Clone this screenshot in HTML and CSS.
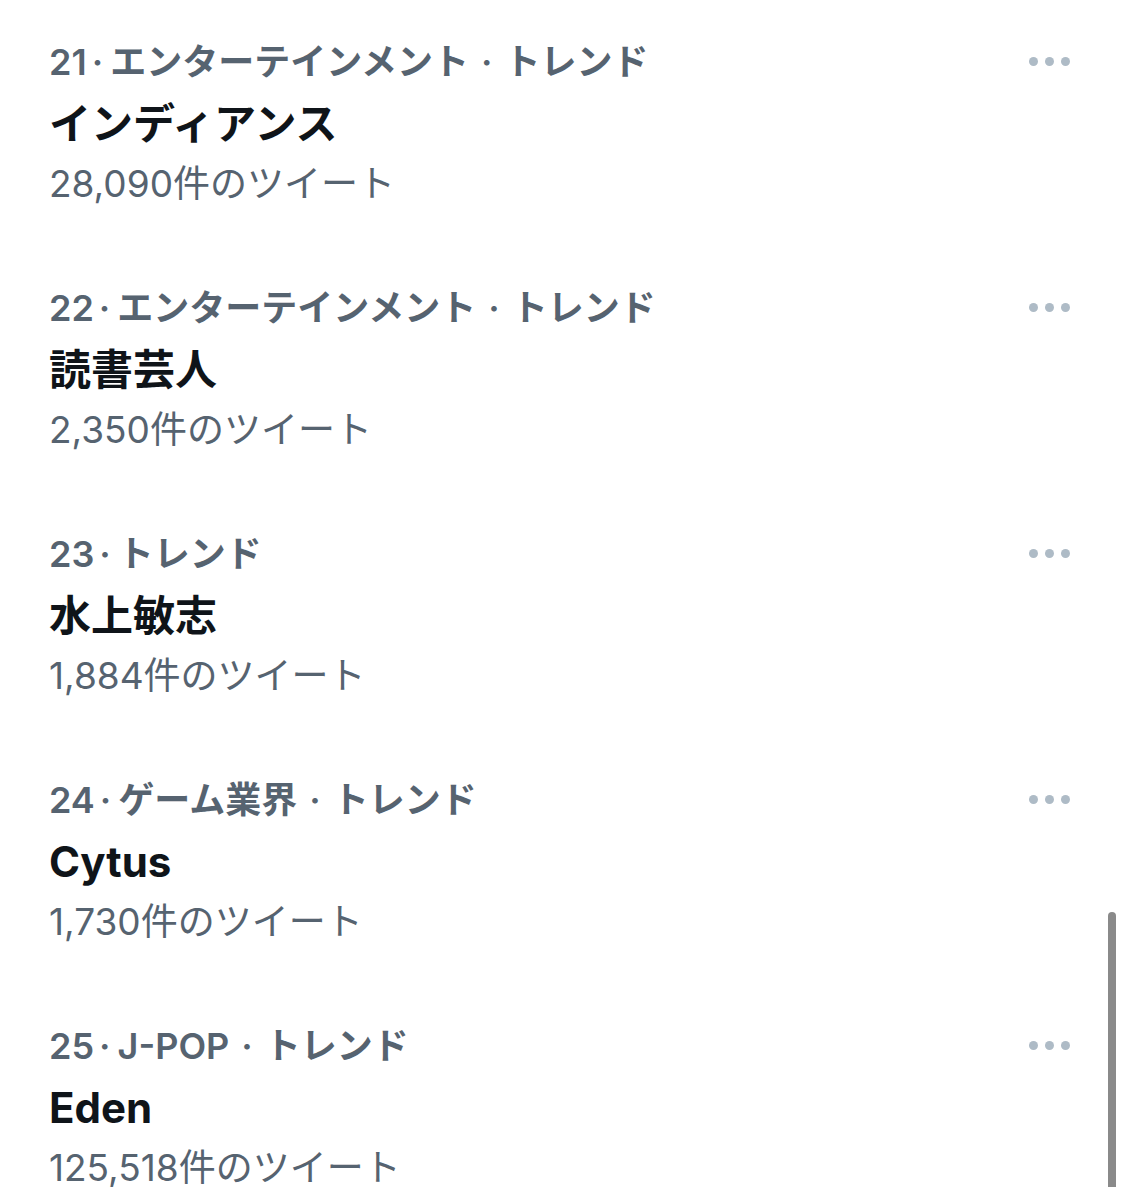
FILE: index.html
```html
<!DOCTYPE html>
<html lang="ja">
<head>
    <meta charset="UTF-8">
    <meta name="viewport" content="width=device-width, initial-scale=1.0">
    <title>トレンド</title>
    <link rel="stylesheet" href="styles.css">
</head>
<body>
    <div class="trend-list">
        <div class="trend">
            <div class="trend-text">
                <div class="trend-meta"><span class="rank">21</span><span class="sep">·</span>エンターテインメント<span class="dot">·</span>トレンド</div>
                <div class="trend-name">インディアンス</div>
                <div class="trend-count">28,090件のツイート</div>
            </div>
            <div class="more"><span></span><span></span><span></span></div>
        </div>
        <div class="trend">
            <div class="trend-text">
                <div class="trend-meta"><span class="rank">22</span><span class="sep">·</span>エンターテインメント<span class="dot">·</span>トレンド</div>
                <div class="trend-name">読書芸人</div>
                <div class="trend-count">2,350件のツイート</div>
            </div>
            <div class="more"><span></span><span></span><span></span></div>
        </div>
        <div class="trend">
            <div class="trend-text">
                <div class="trend-meta"><span class="rank">23</span><span class="sep">·</span>トレンド</div>
                <div class="trend-name">水上敏志</div>
                <div class="trend-count">1,884件のツイート</div>
            </div>
            <div class="more"><span></span><span></span><span></span></div>
        </div>
        <div class="trend">
            <div class="trend-text">
                <div class="trend-meta"><span class="rank">24</span><span class="sep">·</span>ゲーム業界<span class="dot">·</span>トレンド</div>
                <div class="trend-name">Cytus</div>
                <div class="trend-count">1,730件のツイート</div>
            </div>
            <div class="more"><span></span><span></span><span></span></div>
        </div>
        <div class="trend">
            <div class="trend-text">
                <div class="trend-meta"><span class="rank">25</span><span class="sep">·</span>J-POP<span class="dot">·</span>トレンド</div>
                <div class="trend-name">Eden</div>
                <div class="trend-count">125,518件のツイート</div>
            </div>
            <div class="more"><span></span><span></span><span></span></div>
        </div>
    </div>
    <div class="scrollbar"></div>
</body>
</html>
```

FILE: styles.css
```css
body {
    margin: 0;
    background-color: #fff;
    font-family: Inter, "Noto Sans CJK JP", sans-serif;
    overflow: hidden;
}
.trend-list {
    display: flex;
    flex-direction: column;
    padding: 37px 0 0 49px;
}
.trend {
    display: flex;
    justify-content: space-between;
    align-items: flex-start;
    height: 246px;
    padding-right: 54px;
    box-sizing: border-box;
}
.trend-meta {
    font-size: 36px;
    line-height: 50px;
    font-weight: 600;
    color: #566370;
    white-space: nowrap;
}
.sep {
    margin: 0 7px 0 5px;
}
.dot {
    margin: 0 12px;
}
.trend-name {
    font-size: 42px;
    line-height: 74px;
    font-weight: 700;
    color: #0f1419;
}
.trend-count {
    font-size: 37px;
    line-height: 46px;
    color: #566370;
}
.more {
    display: flex;
    gap: 7px;
    padding-top: 20px;
}
.more span {
    width: 9px;
    height: 9px;
    border-radius: 50%;
    background-color: #aebbc6;
}
.scrollbar {
    position: fixed;
    right: 8px;
    top: 912px;
    bottom: 0;
    width: 8px;
    border-radius: 4px 4px 0 0;
    background-color: #8a8a8a;
}
```
